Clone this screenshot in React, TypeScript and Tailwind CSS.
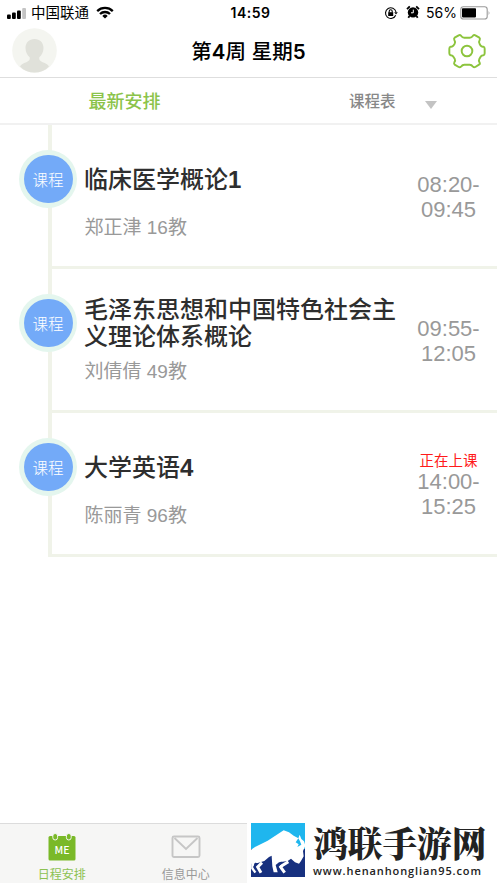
type Course = {
  title: string;
  teacher: string;
  start: string;
  end: string;
  active?: boolean;
};

const courses: Course[] = [
  { title: '临床医学概论1', teacher: '郑正津 16教', start: '08:20-', end: '09:45' },
  { title: '毛泽东思想和中国特色社会主义理论体系概论', teacher: '刘倩倩 49教', start: '09:55-', end: '12:05' },
  { title: '大学英语4', teacher: '陈丽青 96教', start: '14:00-', end: '15:25', active: true },
];

function StatusBar() {
  return (
    <div className="flex h-[26px] items-center justify-between pl-[7px] pr-[6px] font-['Inter','Noto_Sans_CJK_SC',sans-serif] text-black">
      <div className="flex w-[200px] items-center">
        <svg width="20" height="11" viewBox="0 0 20 11">
          <rect x="0" y="6.5" width="3.8" height="4.5" rx="1" />
          <rect x="5" y="4.5" width="3.8" height="6.5" rx="1" />
          <rect x="10" y="2.5" width="3.8" height="8.5" rx="1" />
          <rect x="15.2" y="0" width="3.8" height="11" rx="1" fill="#c4c4c4" />
        </svg>
        <span className="ml-[4px] mt-px text-[14.5px] leading-none">中国联通</span>
        <svg className="ml-[7px] -mt-[2px]" width="18" height="13" viewBox="0 0 18 13" fill="none" stroke="#000" strokeWidth="2.3">
          <path d="M1.2 5.1a11.2 11.2 0 0 1 15.6 0" />
          <path d="M4 8a7.2 7.2 0 0 1 10 0" />
          <path d="M9 12.6 6.3 9.9a3.9 3.9 0 0 1 5.4 0z" fill="#000" stroke="none" />
        </svg>
      </div>
      <span className="ml-[3px] text-[14px] font-semibold leading-none tracking-[0.5px]">14:59</span>
      <div className="flex w-[200px] items-center justify-end">
        <svg width="14" height="14" viewBox="0 0 14 14" fill="none" stroke="#000" strokeWidth="1.1">
          <path d="M11.7 9.2A5.3 5.3 0 1 1 12 6" />
          <path d="M10.2 6.2h3.6L12 8.6z" fill="#000" stroke="none" />
          <rect x="4.2" y="6.2" width="5" height="3.8" fill="#000" stroke="none" />
          <path d="M5.2 6.4V5.2a1.5 1.5 0 0 1 3 0v1.2" />
        </svg>
        <svg className="ml-[8px] -mt-[2px]" width="14" height="14" viewBox="0 0 14 14">
          <circle cx="7" cy="7.4" r="5.2" />
          <path d="M1 4.2 3.8 1.4M13 4.2l-2.8-2.8M3.5 11 2.3 12.8M10.5 11l1.2 1.8" stroke="#000" strokeWidth="1.8" />
          <path d="M7.3 4.6v3.2H5" fill="none" stroke="#fff" strokeWidth="1" />
        </svg>
        <span className="ml-[6px] text-[14px] leading-none">56%</span>
        <svg className="ml-[3px] -mt-px" width="31" height="14" viewBox="0 0 31 14">
          <rect x="0.8" y="0.8" width="26.4" height="12.2" rx="2.6" fill="none" stroke="#9a9a9a" strokeWidth="1.1" />
          <rect x="2" y="2.2" width="14" height="9.2" rx="0.8" />
          <path d="M28.6 4.8q1.8 2.2 0 4.4z" fill="#9a9a9a" />
        </svg>
      </div>
    </div>
  );
}

function Header() {
  return (
    <header className="flex h-[52px] items-center justify-between border-b border-[#dedede] pl-[12px] pr-[11px]">
      <svg className="-mt-[2px]" width="45" height="45" viewBox="0 0 45 45">
        <circle cx="22.5" cy="22.5" r="22.3" fill="#f4f5f0" />
        <path
          d="M22.5 11c5.5 0 9 3.8 9 9 0 4-1.7 7.2-4.2 9.2-.6 2.8.8 3.8 3.4 5 3 1.2 5 2 6.3 4.2-4 4-8.5 6-14.5 6s-10.5-2-14.5-6c1.3-2.2 3.3-3 6.3-4.2 2.6-1.2 4-2.2 3.4-5-2.5-2-4.2-5.2-4.2-9.2 0-5.2 3.5-9 9-9z"
          fill="#e0e1da"
        />
      </svg>
      <h1 className="mr-[8px] pt-px text-[20.5px] font-medium leading-none text-black">
        第<b className="font-['Inter'] font-semibold">4</b>周 星期<b className="font-['Inter'] font-semibold">5</b>
      </h1>
      <svg className="-mt-[2px]" width="38" height="36" viewBox="602 98 114 108" fill="none" stroke="#8cc43d" strokeWidth="5.8" strokeLinejoin="round">
        <path d="M634 105Q638 103 641 106Q645 112 651 112H667Q673 112 677 106Q680 103 684 105L696 112Q699 115 697 119Q693 125 697 131L700 136Q703 140 708 139Q712 140 712 145V159Q712 164 708 165Q703 165 700 169L696 176Q693 181 697 187Q699 191 695 193L684 200Q680 202 677 199Q673 193 667 193H651Q645 193 641 199Q638 202 634 200L622 193Q619 190 621 186Q625 180 622 175L618 169Q615 165 610 165Q606 164 606 159V145Q606 140 610 139Q615 140 618 136L622 130Q625 125 621 119Q619 115 622 112Z" />
        <circle cx="659" cy="152" r="16" />
      </svg>
    </header>
  );
}

function Tabs() {
  return (
    <div className="flex h-[47px] items-center border-b-2 border-[#f1f1f1]">
      <div className="mt-[2px] w-[249px] text-center text-[18px] font-medium leading-none text-[#8bc34a]">最新安排</div>
      <div className="flex flex-1 items-center pl-[100px]">
        <span className="mt-[2px] text-[15.5px] font-medium leading-none text-[#888]">课程表</span>
        <span className="ml-[29px] mt-[9px] border-x-[6.5px] border-t-[8px] border-x-transparent border-t-[#c3c3c3]" />
      </div>
    </div>
  );
}

// Digits are set bold on their own, Chinese characters stay at medium weight
function CourseTitle({ title }: { title: string }) {
  return (
    <h2 className="text-[24px] font-medium leading-[27px] text-[#2e2e2e]">
      {title.split(/(\d+)/).map((part, i) => (/^\d+$/.test(part) ? <b key={i}>{part}</b> : part))}
    </h2>
  );
}

function CourseRow({ course }: { course: Course }) {
  return (
    <li className="flex h-[144px]">
      <div className="flex w-[48px] shrink-0 justify-end">
        <div className="z-10 -mr-[29px] mt-[25px] flex size-[58px] shrink-0 items-center justify-center rounded-full bg-[#e4f6ee]">
          <div className="flex h-[48px] w-[49px] items-center justify-center rounded-full bg-[#73aaf8] pt-[3px] text-[15.5px] font-light leading-none text-white">
            课程
          </div>
        </div>
      </div>
      <div className="flex flex-1 border-b-[3px] border-l-4 border-[#f0f3e9] pl-[32px]">
        <div className="w-[314px]">
          <div className="mt-[26px] flex h-[56px] items-center">
            <CourseTitle title={course.title} />
          </div>
          <p className="mt-[9px] pl-[0.5px] text-[19px] leading-[24px] text-[#999]">{course.teacher}</p>
        </div>
        <div className="flex flex-1 flex-col justify-center pl-[2px] pt-[3px] text-center text-[22px] leading-[25px] text-[#999]">
          {course.active && <span className="mt-px text-[14.5px] leading-[16px] text-[#ff1a1a]">正在上课</span>}
          <span>{course.start}</span>
          <span>{course.end}</span>
        </div>
      </div>
    </li>
  );
}

function Watermark() {
  return (
    <div className="flex flex-1 bg-white pl-[4px]">
      <svg width="54" height="54" viewBox="0 0 162 162">
        <rect width="162" height="162" fill="#1fb6ee" />
        <path d="M0 78H162V162H0z" fill="#17307f" />
        <path
          d="M0 80 12 72 50 53 82 32 98 22 114 28 128 38 142 46 146 35 151 48 159 55 163 68 156 84 158 100 150 114 144 122 132 118 120 107 110 114 84 118 74 126 80 148H68L64 130 62 98 54 102 40 114 20 120 0 122z"
          fill="#fff"
        />
        <path d="M142 46 134 58 143 64 139 72 151 65 147 55z" fill="#1fb6ee" />
        <path d="M5 116V136L14 148M33 119 20 132 30 149M112 116 88 131 101 149" fill="none" stroke="#fff" strokeWidth="9" />
        <path d="M16 120 9 132 18 146M92 117 80 131 87 147" fill="none" stroke="#17307f" strokeWidth="5" />
      </svg>
      <div className="ml-[8px] flex flex-col whitespace-nowrap text-[#222]">
        <span className="h-[40px] text-[34.7px] font-black leading-[39px] font-['Noto_Serif_CJK_SC','Noto_Sans_CJK_SC',serif]">鸿联手游网</span>
        <span className="text-[11px] font-semibold leading-[15px] tracking-[0.9px] font-['Open_Sans',sans-serif]">
          www.henanhonglian95.com
        </span>
      </div>
    </div>
  );
}

function BottomBar() {
  return (
    <footer className="flex h-[60px]">
      <nav className="flex w-[247px] border-t border-[#dcdcdc] bg-[#f6f6f5] text-[12px] leading-none">
        <div className="flex w-[124px] flex-col items-center pt-[9px] text-[#8cc152]">
          <svg width="28" height="28" viewBox="0 0 28 28">
            <rect x="0.5" y="3" width="27" height="24.5" rx="1.5" fill="#7ab928" />
            <rect x="4.8" y="0.5" width="4.8" height="6.5" rx="2.4" fill="#7ab928" stroke="#f6f6f5" />
            <rect x="18.4" y="0.5" width="4.8" height="6.5" rx="2.4" fill="#7ab928" stroke="#f6f6f5" />
            <text x="14" y="20.5" textAnchor="middle" fontSize="10.5" fontWeight="500" fill="#fff" className="font-['Noto_Sans_CJK_SC']">
              ME
            </text>
          </svg>
          <span className="mt-[8px]">日程安排</span>
        </div>
        <div className="flex w-[124px] flex-col items-center pl-px pt-[9px] text-[#999]">
          <svg width="30" height="28" viewBox="0 0 30 28" fill="none" stroke="#c6c6c6" strokeWidth="1.9">
            <rect x="1.5" y="3.5" width="27" height="20.5" rx="1.5" />
            <path d="m3.5 5 11.5 11 11.5-11" />
          </svg>
          <span className="mt-[8px]">信息中心</span>
        </div>
      </nav>
      <Watermark />
    </footer>
  );
}

export default function App() {
  return (
    <div className="flex h-screen flex-col overflow-hidden bg-white font-['Liberation_Sans','Noto_Sans_CJK_SC',sans-serif]">
      <StatusBar />
      <Header />
      <Tabs />
      <ul className="flex-1">
        {courses.map((course) => (
          <CourseRow key={course.title} course={course} />
        ))}
      </ul>
      <BottomBar />
    </div>
  );
}
